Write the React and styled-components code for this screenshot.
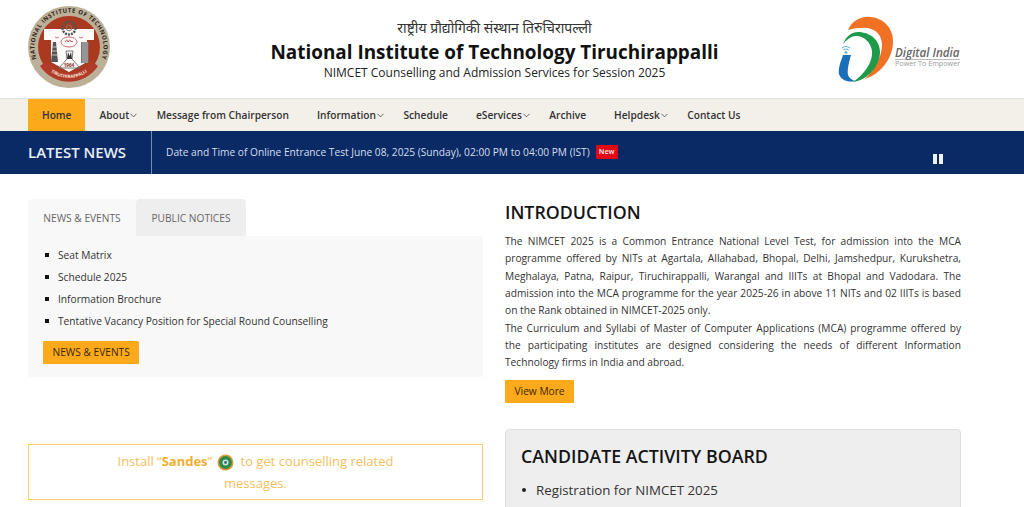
import React from 'react';
import styled, { createGlobalStyle } from 'styled-components';
import { ChevronDown } from 'lucide-react';

const GlobalStyle = createGlobalStyle`
  html, body {
    margin: 0;
    padding: 0;
    background: #fff;
    overflow: hidden;
  }
  * { box-sizing: border-box; }
  body {
    font-family: "Open Sans", "Noto Sans", "DejaVu Sans", sans-serif;
    color: #222;
  }
`;

const Page = styled.div`
  width: 1024px;
  height: 507px;
  overflow: hidden;
`;

const Header = styled.header`
  height: 98px;
  padding: 6px 61px 0 28px;
  display: flex;
  align-items: flex-start;
  justify-content: space-between;
`;

const TitleBlock = styled.div`
  flex: 1;
  padding: 12px 0 0 41px;
  text-align: center;
`;

const HindiTitle = styled.div`
  font-family: "Noto Sans", "DejaVu Sans", "Noto Sans CJK SC", sans-serif;
  font-size: 14px;
  line-height: 20px;
  color: #333;
`;

const MainTitle = styled.h1`
  margin: 0;
  font-size: 18.9px;
  line-height: 28px;
  font-weight: 700;
  color: #111;
`;

const SubTitle = styled.div`
  font-size: 12px;
  line-height: 13px;
  font-weight: 500;
  color: #222;
`;

const DigitalLogo = styled.svg`
  width: 125px;
  height: 70px;
  margin-top: 9px;
`;

const Nav = styled.nav`
  height: 33px;
  padding: 0 28px;
  display: flex;
  background: #f3f0ea;
  border-top: 1px solid #e4e2de;
`;

const NavItem = styled.a`
  height: 100%;
  display: flex;
  align-items: center;
  padding: ${p => (p.$drop ? '0 4px 0 14px' : '0 14px')};
  background: ${p => (p.$active ? '#fcaa1b' : 'transparent')};
  font-size: 10.2px;
  font-weight: 600;
  color: #333;
  white-space: nowrap;

  & svg {
    margin: 0 -0.6px 0 -1px;
    flex-shrink: 0;
  }
`;

const NewsBar = styled.div`
  height: 43px;
  padding-left: 28px;
  display: flex;
  align-items: center;
  background: #0a2a66;
  position: relative;
`;

const NewsLabel = styled.div`
  width: 124px;
  height: 100%;
  padding-bottom: 1px;
  display: flex;
  align-items: center;
  border-right: 1px solid #6f8db5;
  font-size: 15px;
  font-weight: 600;
  color: #e8eef6;
`;

const NewsText = styled.div`
  margin: 0 0 2px 14px;
  display: flex;
  align-items: center;
  font-size: 10.2px;
  color: #d5deeb;
  white-space: nowrap;
`;

const NewBadge = styled.span`
  margin-left: 6px;
  padding: 0 3px;
  height: 14px;
  line-height: 14px;
  border-radius: 1px;
  background: #e30613;
  color: #f6d6d6;
  font-size: 7px;
  font-weight: 700;
`;

const PauseIcon = styled.span`
  position: absolute;
  left: 933px;
  top: 23px;
  width: 10px;
  height: 10px;
  border-left: 4px solid #eef1f6;
  border-right: 4px solid #eef1f6;
`;

const Content = styled.main`
  padding: 25px 63px 0 28px;
  display: flex;
  gap: 22px;
  align-items: flex-start;
`;

const LeftCol = styled.section`
  width: 455px;
  flex-shrink: 0;
`;

const RightCol = styled.section`
  flex: 1;
  min-width: 0;
`;

const Tabs = styled.div`
  display: flex;
  height: 37px;
`;

const Tab = styled.div`
  width: ${p => (p.$active ? '108px' : '110px')};
  height: 37px;
  display: flex;
  align-items: center;
  justify-content: center;
  border-radius: 4px 4px 0 0;
  background: ${p => (p.$active ? '#f8f8f8' : '#eeeeee')};
  font-size: 10.2px;
  color: #666;
`;

const TabPanel = styled.div`
  height: 141px;
  padding: 8px 15px 0;
  background: #f8f8f8;
`;

const NewsList = styled.ul`
  margin: 0 0 7px;
  padding: 0;
  list-style: none;
`;

const NewsRow = styled.li`
  height: 22px;
  display: flex;
  align-items: center;
  font-size: 10.2px;
  color: #333;

  &::before {
    content: "";
    width: 4px;
    height: 4px;
    margin: 0 9px 0 2px;
    background: #111;
  }
`;

const OrangeButton = styled.a`
  display: inline-flex;
  align-items: center;
  height: 23px;
  padding: 0 9.5px;
  border-radius: 1px;
  background: #fcaa1b;
  font-size: 10.2px;
  color: #3a2600;
  white-space: nowrap;
`;

const SandesBox = styled.div`
  margin-top: 67px;
  height: 56px;
  padding: 5px 60px 0;
  border: 1px solid #f4cf73;
  text-align: center;
  font-size: 13px;
  line-height: 22px;
  color: #f3c05c;

  & strong {
    font-weight: 700;
    color: #f2ae30;
  }
`;

const SandesIcon = styled.svg`
  width: 17px;
  height: 17px;
  margin: 0 3px 0 5px;
  vertical-align: -5px;
`;

const Heading = styled.h2`
  margin: 0;
  font-size: 17.8px;
  line-height: 26px;
  font-weight: 600;
  color: #151515;
`;

const Paragraph = styled.p`
  margin: 8px 0 0;
  font-size: 10.2px;
  line-height: 17.35px;
  text-align: justify;
  color: #333;
`;

const ViewMore = styled(OrangeButton)`
  margin-top: 8px;
`;

const Board = styled.div`
  margin-top: 26px;
  height: 120px;
  padding: 13px 15px;
  border: 1px solid #dedede;
  border-radius: 4px;
  background: #eeeeee;
`;

const BoardList = styled.ul`
  margin: 10px 0 0;
  padding: 0;
  list-style: none;
`;

const BoardRow = styled.li`
  display: flex;
  align-items: center;
  font-size: 13.3px;
  line-height: 22px;
  color: #333;

  &::before {
    content: "";
    width: 4px;
    height: 4px;
    margin: 0 10px 0 1px;
    border-radius: 50%;
    background: #222;
  }
`;

const CollegeLogo = () => (
  <svg width="82" height="82" viewBox="0 0 82 82" aria-label="NIT Tiruchirappalli logo">
    <defs>
      <path id="ringTop" d="M12.5 60.5 A34.5 34.5 0 1 1 69.5 60.5" />
      <path id="ringBottom" d="M17 60 A30 30 0 0 0 65 60" />
    </defs>
    <circle cx="41" cy="41" r="41" fill="#bcb099" />
    <circle cx="41" cy="41" r="31" fill="#a93a1f" />
    <text fontFamily="Open Sans" fontSize="6" fontWeight="700" letterSpacing="0.5" fill="#2b2418">
      <textPath href="#ringTop" startOffset="50%" textAnchor="middle">NATIONAL INSTITUTE OF TECHNOLOGY</textPath>
    </text>
    <path d="M16 23 H66 V34 H59 V56 L41 66 L23 56 V34 H16 Z" fill="#fdfbf8" />
    <path d="M12 60 A34.5 34.5 0 0 0 70 60 L63 55 A26.5 26.5 0 0 1 19 55 Z" fill="#b23a28" />
    <text fontFamily="Open Sans" fontSize="4.4" fontWeight="700" fill="#f6e6dc">
      <textPath href="#ringBottom" startOffset="50%" textAnchor="middle">TIRUCHIRAPPALLI</textPath>
    </text>
    <circle cx="41" cy="22" r="6.5" fill="none" stroke="#555" strokeWidth="2.4" strokeDasharray="2 1" />
    <circle cx="41" cy="22" r="2.8" fill="none" stroke="#777" strokeWidth="1" />
    <ellipse cx="41" cy="36" rx="8" ry="5" fill="none" stroke="#c9707e" strokeWidth="1" />
    <path d="M37 36 q2 -4 3 0 q2 -4 3 0 q1 -2 2 0" fill="none" stroke="#b23a50" strokeWidth="0.8" />
    <path d="M27 31 q2 2 4 0 M51 31 q2 2 4 0" fill="none" stroke="#c9506a" strokeWidth="0.8" />
    <path d="M23 56 L25 36 H28 L30 56 Z" fill="#555" />
    <path d="M24 41 H29 M24 45 H29 M24 49 H30" stroke="#ddd" strokeWidth="0.8" />
    <rect x="53" y="36" width="7.5" height="21" fill="#777" />
    <path d="M55 36 V57 M57 36 V57 M59 36 V57" stroke="#ddd" strokeWidth="0.6" />
    <path d="M31 62 L39 53 L38 45 H45 L44 53 L52 62 Z" fill="none" stroke="#666" strokeWidth="0.9" />
    <path d="M39 53 L40 46 L41.5 50 L43 46 L44 53 Z" fill="#333" />
    <text x="41" y="61" textAnchor="middle" fontFamily="Open Sans" fontSize="4.6" fontWeight="700" fill="#8a2a18">1964</text>
  </svg>
);

const DigitalIndia = () => (
  <DigitalLogo viewBox="838 15 125 70" aria-label="Digital India logo">
    <path d="M848 30 C852 21 861 16 870 17 C885 18 894 30 893 43 C892 60 880 74 865 79 C873 71 882 58 882 45 C882 33 873 23 848 30 Z" fill="#f07124" />
    <path d="M843 44 C846 36 852 32 858 32 C871 32 880 41 880 52 C880 66 868 80 853 82 C862 76 873 64 872 51 C871 42 863 35 855 36 C850 37 846 40 843 44 Z" fill="#1f9a4b" />
    <path d="M843 55 L851 55 C849 62 847 70 848 75 C849 78 852 80 855 81 C848 83 841 80 839 74 C838 68 841 61 843 55 Z" fill="#1a6fb8" />
    <path d="M842 48 q4 -3 8 0 M843.5 50 q2.5 -2 5 0" fill="none" stroke="#5fb7c9" strokeWidth="1.2" />
    <circle cx="846" cy="52.5" r="1.4" fill="#5fb7c9" />
    <text x="895" y="57" fontFamily="Open Sans" fontSize="11.6" fontStyle="italic" fontWeight="600" fill="#666">Digital India</text>
    <path d="M895 59.5 H960" stroke="#8a8a8a" strokeWidth="0.6" />
    <text x="895" y="66" fontFamily="Open Sans" fontSize="7.2" fill="#9a9a9a">Power To Empower</text>
  </DigitalLogo>
);

const navItems = [
  { label: 'About', drop: true },
  { label: 'Message from Chairperson' },
  { label: 'Information', drop: true },
  { label: 'Schedule' },
  { label: 'eServices', drop: true },
  { label: 'Archive' },
  { label: 'Helpdesk', drop: true },
  { label: 'Contact Us' },
];

const news = ['Seat Matrix', 'Schedule 2025', 'Information Brochure', 'Tentative Vacancy Position for Special Round Counselling'];

const App = () => (
  <Page>
    <GlobalStyle />
    <Header>
      <CollegeLogo />
      <TitleBlock>
        <HindiTitle>राष्ट्रीय प्रौद्योगिकी संस्थान तिरुचिरापल्ली</HindiTitle>
        <MainTitle>National Institute of Technology Tiruchirappalli</MainTitle>
        <SubTitle>NIMCET Counselling and Admission Services for Session 2025</SubTitle>
      </TitleBlock>
      <DigitalIndia />
    </Header>
    <Nav>
      <NavItem $active>Home</NavItem>
      {navItems.map(item => (
        <NavItem key={item.label} $drop={item.drop}>
          {item.label}
          {item.drop && <ChevronDown size={11} strokeWidth={1.6} />}
        </NavItem>
      ))}
    </Nav>
    <NewsBar>
      <NewsLabel>LATEST NEWS</NewsLabel>
      <NewsText>
        Date and Time of Online Entrance Test June 08, 2025 (Sunday), 02:00 PM to 04:00 PM (IST)
        <NewBadge>New</NewBadge>
      </NewsText>
      <PauseIcon />
    </NewsBar>
    <Content>
      <LeftCol>
        <Tabs>
          <Tab $active>NEWS &amp; EVENTS</Tab>
          <Tab>PUBLIC NOTICES</Tab>
        </Tabs>
        <TabPanel>
          <NewsList>
            {news.map(n => <NewsRow key={n}>{n}</NewsRow>)}
          </NewsList>
          <OrangeButton>NEWS &amp; EVENTS</OrangeButton>
        </TabPanel>
        <SandesBox>
          Install “<strong>Sandes</strong>”
          <SandesIcon viewBox="0 0 17 17">
            <circle cx="8.5" cy="8.5" r="8" fill="#d99a3a" />
            <circle cx="8.5" cy="8.5" r="6.5" fill="#2f8a4a" />
            <circle cx="8.5" cy="8.5" r="3" fill="#cfe3d8" />
            <circle cx="8.5" cy="8.5" r="1.4" fill="#2f6f8a" />
          </SandesIcon>
          {' '}to get counselling related messages.
        </SandesBox>
      </LeftCol>
      <RightCol>
        <Heading>INTRODUCTION</Heading>
        <Paragraph>
          The NIMCET 2025 is a Common Entrance National Level Test, for admission into the MCA programme offered by NITs at Agartala, Allahabad, Bhopal, Delhi, Jamshedpur, Kurukshetra, Meghalaya, Patna, Raipur, Tiruchirappalli, Warangal and IIITs at Bhopal and Vadodara. The admission into the MCA programme for the year 2025-26 in above 11 NITs and 02 IIITs is based on the Rank obtained in NIMCET-2025 only.
          <br />
          The Curriculum and Syllabi of Master of Computer Applications (MCA) programme offered by the participating institutes are designed considering the needs of different Information Technology firms in India and abroad.
        </Paragraph>
        <ViewMore>View More</ViewMore>
        <Board>
          <Heading>CANDIDATE ACTIVITY BOARD</Heading>
          <BoardList>
            <BoardRow>Registration for NIMCET 2025</BoardRow>
          </BoardList>
        </Board>
      </RightCol>
    </Content>
  </Page>
);

export default App;
